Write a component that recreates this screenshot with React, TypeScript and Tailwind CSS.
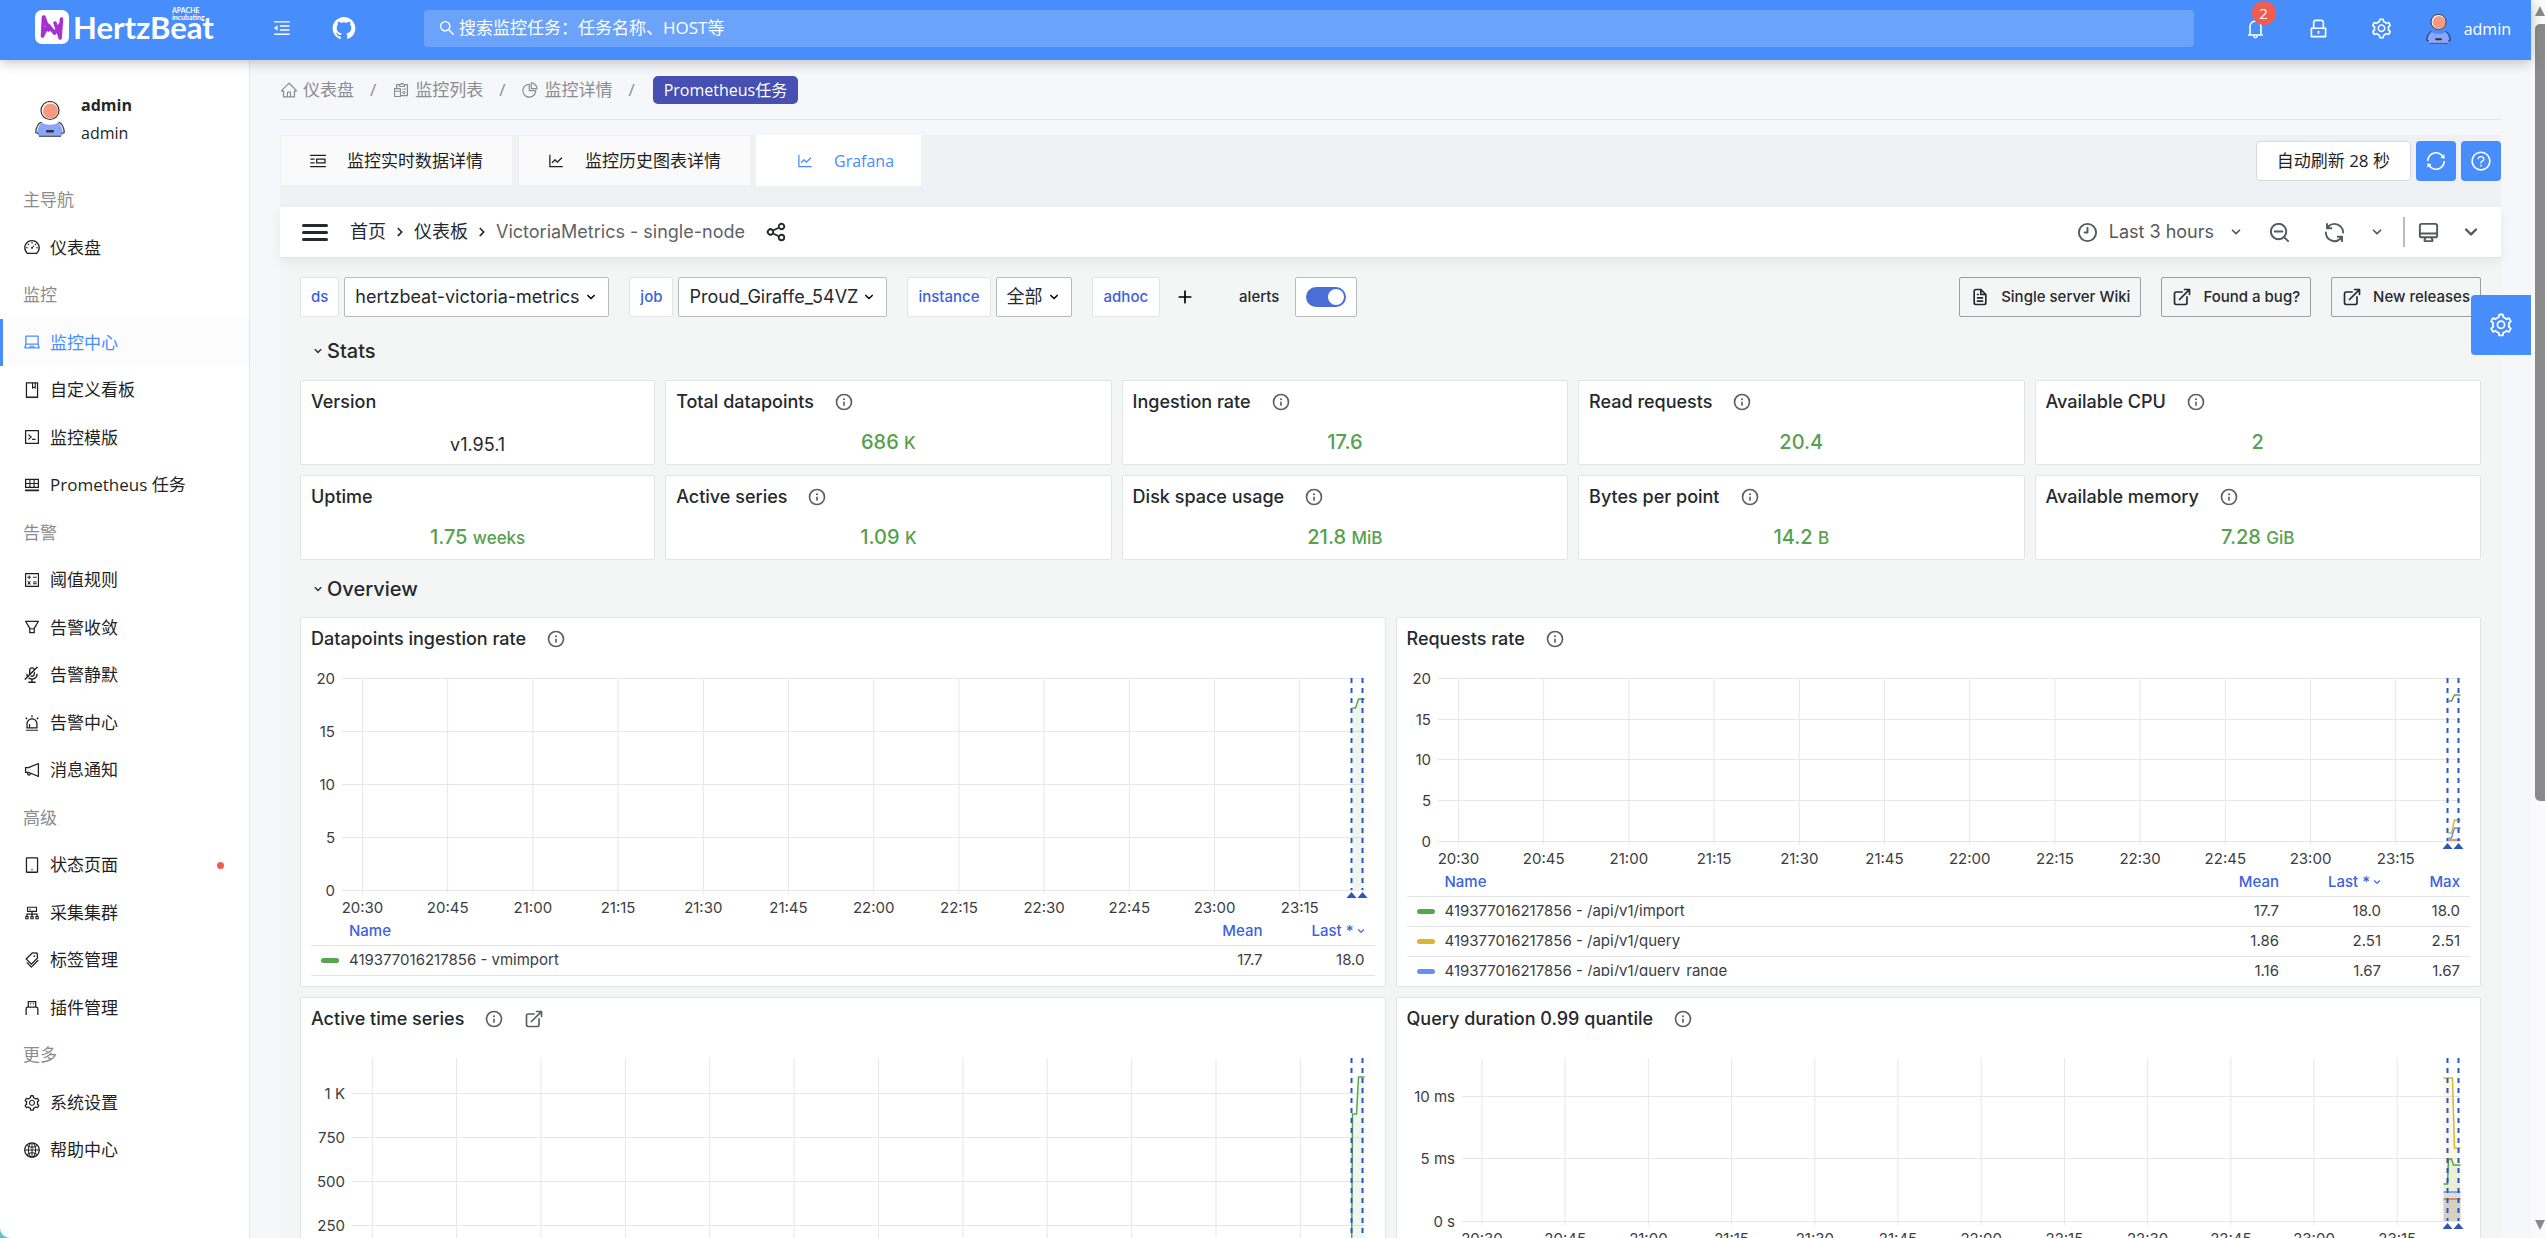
import type { ComponentType, ReactNode } from "react";
import {
  AiOutlineAlert,
  AiOutlineAudioMuted,
  AiOutlineBell,
  AiOutlineBook,
  AiOutlineCalculator,
  AiOutlineCluster,
  AiOutlineCode,
  AiOutlineDashboard,
  AiOutlineFilter,
  AiOutlineGlobal,
  AiOutlineHome,
  AiOutlineInsertRowBelow,
  AiOutlineLaptop,
  AiOutlineLineChart,
  AiOutlineLock,
  AiOutlineMenuFold,
  AiOutlineNotification,
  AiOutlinePicRight,
  AiOutlinePieChart,
  AiOutlineQuestionCircle,
  AiOutlineReconciliation,
  AiOutlineSearch,
  AiOutlineSetting,
  AiOutlineSync,
  AiOutlineTablet,
  AiOutlineTags,
  AiOutlineUsb,
  AiFillGithub,
} from "react-icons/ai";

const icons = {
  info: "M12,2A10,10,0,1,0,22,12,10.01114,10.01114,0,0,0,12,2Zm0,18a8,8,0,1,1,8-8A8.00917,8.00917,0,0,1,12,20Zm0-8.5a1,1,0,0,0-1,1v3a1,1,0,0,0,2,0v-3A1,1,0,0,0,12,11.5Zm0-4a1.25,1.25,0,1,0,1.25,1.25A1.25,1.25,0,0,0,12,7.5Z",
  down: "M17,9.17a1,1,0,0,0-1.41,0L12,12.71,8.46,9.17a1,1,0,0,0-1.41,0,1,1,0,0,0,0,1.42l4.24,4.24a1,1,0,0,0,1.42,0L17,10.59A1,1,0,0,0,17,9.17Z",
  right: "M14.83,11.29,10.59,7.05a1,1,0,0,0-1.42,0,1,1,0,0,0,0,1.41L12.71,12,9.17,15.54a1,1,0,0,0,0,1.41,1,1,0,0,0,.71.29,1,1,0,0,0,.71-.29l4.24-4.24A1,1,0,0,0,14.83,11.29Z",
  external: "M18,10.82a1,1,0,0,0-1,1V19a1,1,0,0,1-1,1H5a1,1,0,0,1-1-1V8A1,1,0,0,1,5,7h7.18a1,1,0,0,0,0-2H5A3,3,0,0,0,2,8V19a3,3,0,0,0,3,3H16a3,3,0,0,0,3-3V11.82A1,1,0,0,0,18,10.82Zm3.92-8.2a1,1,0,0,0-.54-.54A1,1,0,0,0,21,2H15a1,1,0,0,0,0,2h3.59L8.29,14.29a1,1,0,0,0,0,1.42,1,1,0,0,0,1.42,0L20,5.41V9a1,1,0,0,0,2,0V3A1,1,0,0,0,21.92,2.62Z",
  zoomOut: "M21.71,20.29,18,16.61A9,9,0,1,0,16.61,18l3.68,3.68a1,1,0,0,0,1.42,0A1,1,0,0,0,21.71,20.29ZM11,18a7,7,0,1,1,7-7A7,7,0,0,1,11,18Zm4-8H7a1,1,0,0,0,0,2h8a1,1,0,0,0,0-2Z",
  sync: "M19.91,15.51H15.38a1,1,0,0,0,0,2h2.4A8,8,0,0,1,4,12a1,1,0,0,0-2,0,10,10,0,0,0,16.88,7.23V21a1,1,0,0,0,2,0V16.5A1,1,0,0,0,19.91,15.51ZM12,2A10,10,0,0,0,5.12,4.77V3a1,1,0,0,0-2,0V7.5a1,1,0,0,0,1,1h4.5a1,1,0,0,0,0-2H6.22A8,8,0,0,1,20,12a1,1,0,0,0,2,0A10,10,0,0,0,12,2Z",
  clock: "M12,6a.99974.99974,0,0,0-1,1v4H9a1,1,0,0,0,0,2h3a.99974.99974,0,0,0,1-1V7A.99974.99974,0,0,0,12,6Zm0-4A10,10,0,1,0,22,12,10.01146,10.01146,0,0,0,12,2Zm0,18a8,8,0,1,1,8-8A8.00917,8.00917,0,0,1,12,20Z",
  monitor: "M19,2H5A3,3,0,0,0,2,5V15a3,3,0,0,0,3,3H7.64l-.58,1a2,2,0,0,0,0,2,2,2,0,0,0,1.75,1h6.46A2,2,0,0,0,17,21a2,2,0,0,0,0-2l-.59-1H19a3,3,0,0,0,3-3V5A3,3,0,0,0,19,2ZM8.77,20,10,18H14l1.2,2ZM20,15a1,1,0,0,1-1,1H5a1,1,0,0,1-1-1V14H20Zm0-3H4V5A1,1,0,0,1,5,4H19a1,1,0,0,1,1,1Z",
  share: "M18,14a4,4,0,0,0-3.08,1.48l-5.1-2.35a3.64,3.64,0,0,0,0-2.26l5.1-2.35A4,4,0,1,0,14,6a4.17,4.17,0,0,0,.07.71L8.79,9.14a4,4,0,1,0,0,5.72l5.28,2.43A4.17,4.17,0,0,0,14,18a4,4,0,1,0,4-4ZM18,4a2,2,0,1,1-2,2A2,2,0,0,1,18,4ZM6,14a2,2,0,1,1,2-2A2,2,0,0,1,6,14Zm12,6a2,2,0,1,1,2-2A2,2,0,0,1,18,20Z",
  file: "M9,10h1a1,1,0,0,0,0-2H9a1,1,0,0,0,0,2Zm0,2a1,1,0,0,0,0,2h6a1,1,0,0,0,0-2ZM20,8.94a1.31,1.31,0,0,0-.06-.27l0-.09a1.07,1.07,0,0,0-.19-.28h0l-6-6h0a1.07,1.07,0,0,0-.28-.19.32.32,0,0,0-.09,0A.88.88,0,0,0,13.05,2H7A3,3,0,0,0,4,5V19a3,3,0,0,0,3,3H17a3,3,0,0,0,3-3V9S20,9,20,8.94ZM14,5.41,16.59,8H14ZM18,19a1,1,0,0,1-1,1H7a1,1,0,0,1-1-1V5A1,1,0,0,1,7,4h5V9a1,1,0,0,0,1,1h5Zm-3-3H9a1,1,0,0,0,0,2h6a1,1,0,0,0,0-2Z",
  plus: "M19,11H13V5a1,1,0,0,0-2,0v6H5a1,1,0,0,0,0,2h6v6a1,1,0,0,0,2,0V13h6a1,1,0,0,0,0-2Z",
};

function Icon({ name, size = 22, className = "" }: { name: keyof typeof icons; size?: number; className?: string }) {
  return (
    <svg viewBox="0 0 24 24" width={size} height={size} fill="currentColor" className={`shrink-0 ${className}`} aria-hidden="true">
      <path d={icons[name]} />
    </svg>
  );
}

function Avatar({ height }: { height: number }) {
  return (
    <svg viewBox="0 0 30 36" height={height} className="shrink-0" aria-hidden="true">
      <circle cx="15" cy="9.500" r="9" fill="#fff" stroke="#333" strokeWidth="1.200" />
      <circle cx="15.500" cy="10" r="7.600" fill="#f79a80" />
      <path d="M7 21.500C10 24.500 20 24.500 23 21.500C26 23.500 28 28 27.500 33Q27 35.500 24 35.500H6Q3 35.500 2.500 33C2 28 4 23.500 7 21.500Z" fill="#8ba6f8" />
      <path d="M3.500 32.500L0.800 31.500C1 26.500 3 22.500 6.500 21M26.500 32.500L29.200 31.500C29 26.500 27 22.500 23.500 21" fill="none" stroke="#333" strokeWidth="1.200" />
      <path d="M4 35.300H26" stroke="#555" strokeWidth="1.200" />
      <rect x="11" y="29" width="8" height="2.600" rx="1" fill="#333" />
    </svg>
  );
}

type MenuEntry = { label: string; icon?: ComponentType<{ size?: number }>; active?: boolean; dot?: boolean };

const menu: MenuEntry[] = [
  { label: "主导航" },
  { label: "仪表盘", icon: AiOutlineDashboard },
  { label: "监控" },
  { label: "监控中心", icon: AiOutlineLaptop, active: true },
  { label: "自定义看板", icon: AiOutlineBook },
  { label: "监控模版", icon: AiOutlineCode },
  { label: "Prometheus 任务", icon: AiOutlineInsertRowBelow },
  { label: "告警" },
  { label: "阈值规则", icon: AiOutlineCalculator },
  { label: "告警收敛", icon: AiOutlineFilter },
  { label: "告警静默", icon: AiOutlineAudioMuted },
  { label: "告警中心", icon: AiOutlineAlert },
  { label: "消息通知", icon: AiOutlineNotification },
  { label: "高级" },
  { label: "状态页面", icon: AiOutlineTablet, dot: true },
  { label: "采集集群", icon: AiOutlineCluster },
  { label: "标签管理", icon: AiOutlineTags },
  { label: "插件管理", icon: AiOutlineUsb },
  { label: "更多" },
  { label: "系统设置", icon: AiOutlineSetting },
  { label: "帮助中心", icon: AiOutlineGlobal },
];

const stats = [
  { title: "Version", value: "v1.95.1", plain: true },
  { title: "Total datapoints", value: "686", unit: "K", info: true },
  { title: "Ingestion rate", value: "17.6", info: true },
  { title: "Read requests", value: "20.4", info: true },
  { title: "Available CPU", value: "2", info: true },
  { title: "Uptime", value: "1.75", unit: "weeks" },
  { title: "Active series", value: "1.09", unit: "K", info: true },
  { title: "Disk space usage", value: "21.8", unit: "MiB", info: true },
  { title: "Bytes per point", value: "14.2", unit: "B", info: true },
  { title: "Available memory", value: "7.28", unit: "GiB", info: true },
];

const times = ["20:30", "20:45", "21:00", "21:15", "21:30", "21:45", "22:00", "22:15", "22:30", "22:45", "23:00", "23:15"];

const green = "#56a64b";
const yellow = "#dab62c";
const blue = "#6690f0";
const orange = "#e0752d";

// points are measured from the right edge of the plot
type Series = { color: string; points: [number, number][]; fill?: number };

function Chart({ height, left, top = 20, bottom, ticks, series }: {
  height: number;
  left: number;
  top?: number;
  bottom: number;
  ticks: { label: string; y: number }[];
  series: Series[];
}) {
  return (
    <svg width="100%" height={height} className="block shrink-0 font-['Inter',sans-serif] text-[15px]" fill="#3b3d42">
      {ticks.map((t) => (
        <text key={t.label} x={left - 7} y={t.y} textAnchor="end" dominantBaseline="central">{t.label}</text>
      ))}
      <svg x={left} y={0} height={height} style={{ width: `calc(100% - ${left + 20}px)` }} overflow="visible">
        {ticks.map((t) => (
          <line key={t.label} x1="0" x2="100%" y1={t.y + 0.5} y2={t.y + 0.5} stroke="#e6e7e8" />
        ))}
        {times.map((time, i) => {
          const x = `${2 + (i * 100) / 12}%`;
          return (
            <g key={time}>
              <line x1={x} x2={x} y1={top} y2={bottom + 4} stroke="#e6e7e8" />
              <text x={x} y={bottom + 17} textAnchor="middle" dominantBaseline="central">{time}</text>
            </g>
          );
        })}
        <svg x="100%" y={0} overflow="visible">
          {series.map((s) => {
            const line = s.points.map((p) => p.join(",")).join(" ");
            const first = s.points[0][0];
            const last = s.points[s.points.length - 1][0];
            return (
              <g key={s.color}>
                {s.fill && <polygon points={`${first},${bottom} ${line} ${last},${bottom}`} fill={s.color} fillOpacity={s.fill} />}
                <polyline points={line} fill="none" stroke={s.color} strokeWidth="1.5" />
              </g>
            );
          })}
          {[-13, -2].map((x) => (
            <g key={x}>
              <line x1={x} x2={x} y1={top} y2={bottom} stroke="#2f55b8" strokeWidth="2" strokeDasharray="5 5" />
              <path d={`M${x - 5} ${bottom + 8}L${x} ${bottom + 2}L${x + 5} ${bottom + 8}Z`} fill="#2f55b8" />
            </g>
          ))}
        </svg>
      </svg>
    </svg>
  );
}

function Legend({ columns, rows }: { columns: string[]; rows: { color: string; name: string; values: string[] }[] }) {
  return (
    <div className="px-[10px]">
      <table className="w-full border-collapse text-[15px] leading-5 text-[#3b3d42]">
        <thead>
          <tr className="h-[27px] border-b border-[#e3e4e5] text-[#3d5fe0]">
            <th className="w-[38px]" aria-label="Color"></th>
            <th className="text-left font-medium">Name</th>
            {columns.map((c) => (
              <th key={c} className={`text-right font-medium ${c === "Max" ? "w-[79px] pr-[10px]" : c === "Mean" ? "w-[102px] pr-[10px]" : "w-[102px] pr-[7px]"}`}>
                <span className="inline-flex items-center">
                  {c}
                  {c === "Last *" && <Icon name="down" size={14} />}
                </span>
              </th>
            ))}
          </tr>
        </thead>
        <tbody>
          {rows.map((r) => (
            <tr key={r.name} className="h-[30px] border-b border-[#e3e4e5]">
              <td><span className={`ml-[10px] block h-[5px] w-[18px] rounded-full ${r.color}`}></span></td>
              <td>{r.name}</td>
              {r.values.map((v, i) => (
                <td key={i} className="pr-[10px] text-right">{v}</td>
              ))}
            </tr>
          ))}
        </tbody>
      </table>
    </div>
  );
}

function PanelTitle({ title, info, link }: { title: string; info?: boolean; link?: boolean }) {
  return (
    <div className="flex h-10 shrink-0 items-center gap-5 px-[10px] pt-[2px] text-[#24292e]">
      <h3 className="text-lg leading-6 font-medium">{title}</h3>
      {info && <Icon name="info" size={20} className="text-[#5b5e63]" />}
      {link && (
        <a href="#explore" aria-label="Open link">
          <Icon name="external" size={20} className="text-[#5b5e63]" />
        </a>
      )}
    </div>
  );
}

function Panel({ title, link, children }: { title: string; link?: boolean; children: ReactNode }) {
  return (
    <section className="flex h-[370px] flex-col overflow-hidden rounded-[2px] border border-[#e3e5e5] bg-white pb-[10px]">
      <PanelTitle title={title} info link={link} />
      <div className="min-h-0 flex-1 overflow-hidden">{children}</div>
    </section>
  );
}

function Variable({ label, value }: { label: string; value: string }) {
  return (
    <div className="flex gap-[5px]">
      <label htmlFor={label} className="flex h-10 items-center rounded-[2px] border border-[#e3e5e5] bg-white px-[10px] text-[15px] font-medium text-[#3d5fe0]">
        {label}
      </label>
      <div className="relative">
        <select id={label} className="h-10 appearance-none rounded-[2px] border border-[#b9bbbd] bg-white pr-[28px] pl-[10px] text-lg text-[#24292e]">
          <option>{value}</option>
        </select>
        <Icon name="down" size={18} className="pointer-events-none absolute top-[11px] right-[9px]" />
      </div>
    </div>
  );
}

function RowHeading({ children }: { children: string }) {
  return (
    <button className="flex items-center gap-px pl-[10px] text-xl font-medium text-[#24292e]">
      <Icon name="down" size={16} />
      {children}
    </button>
  );
}

function Header() {
  return (
    <header className="z-20 flex h-[60px] shrink-0 items-center bg-[#478dfc] pr-5 pl-[35px] text-white shadow-[0_2px_12px_rgba(0,0,0,0.25)]">
      <a href="#home" className="relative flex w-[179px] items-center gap-1 pb-[6px]">
        <svg viewBox="0 0 34 34" width="34" height="34" className="shrink-0" aria-hidden="true">
          <rect width="34" height="34" rx="7" fill="#fff" />
          <path d="M8.500 7L7.500 26M7.500 26L13 15L19.500 23L26 13.500M26.500 9L25 28M9 7L13.500 20M20 13L25 27" fill="none" stroke="#a82fd0" strokeWidth="3.600" strokeLinecap="round" strokeLinejoin="round" />
        </svg>
        <span className="font-['Lato',sans-serif] text-[31px] leading-[34px] font-bold">HertzBeat</span>
        <span className="absolute top-[-3px] left-[137px] font-['Lato',sans-serif] text-[7px] leading-[7px] font-bold">
          APACHE
          <br />
          incubating
        </span>
      </a>
      <button aria-label="折叠菜单" className="ml-[58px] pb-1"><AiOutlineMenuFold size={20} /></button>
      <a href="#github" aria-label="GitHub" className="ml-[39px] pb-1"><AiFillGithub size={26} /></a>
      <label className="mr-[50px] mb-1 ml-[67px] flex h-[37px] flex-1 items-center gap-[3px] rounded-[4px] bg-[#6ba2fa] px-[14px]">
        <AiOutlineSearch size={18} />
        <input
          aria-label="搜索"
          placeholder="搜索监控任务：任务名称、HOST等"
          className="flex-1 bg-transparent text-[17px] outline-none placeholder:text-white"
        />
      </label>
      <button aria-label="通知" className="relative pb-1">
        <AiOutlineBell size={23} />
        <span className="absolute -top-4 left-2 h-6 w-6 rounded-full bg-[#f25b50] text-center text-[15px] leading-6">2</span>
      </button>
      <button aria-label="锁定" className="ml-10 pb-1"><AiOutlineLock size={23} /></button>
      <button aria-label="设置" className="ml-10 pb-1"><AiOutlineSetting size={23} /></button>
      <button className="ml-[33px] flex items-center gap-[13px] pb-[2px] text-base">
        <Avatar height={30} />
        admin
      </button>
    </header>
  );
}

function Sidebar() {
  return (
    <aside className="flex w-[250px] shrink-0 flex-col border-r border-[#e4e5e8] bg-white">
      <div className="flex h-[116px] items-center gap-4 pt-px pl-[35px] text-[#262626]">
        <Avatar height={36} />
        <div className="text-base leading-7">
          <p className="font-bold">admin</p>
          <p>admin</p>
        </div>
      </div>
      <nav className="grid h-[998px] shrink-0 auto-rows-fr">
        {menu.map((m) =>
          m.icon ? (
            <a
              key={m.label}
              href="#menu"
              className={`flex items-center border-l-[3px] pr-[25px] pl-5 text-[17px] ${
                m.active ? "border-[#478dfc] bg-[#fcfcfc] text-[#478dfc]" : "border-transparent text-[#1f1f1f]"
              }`}
            >
              <m.icon size={18} />
              <span className="ml-[9px] flex-1">{m.label}</span>
              {m.dot && <span className="h-[7px] w-[7px] rounded-full bg-[#f25b50]"></span>}
            </a>
          ) : (
            <p key={m.label} className="flex items-center pl-[23px] text-[17px] text-[#8c8c8c]">{m.label}</p>
          )
        )}
      </nav>
    </aside>
  );
}

const crumbs = [
  { label: "仪表盘", icon: AiOutlineHome },
  { label: "监控列表", icon: AiOutlineReconciliation },
  { label: "监控详情", icon: AiOutlinePieChart },
];

function Breadcrumb() {
  return (
    <nav className="flex h-[60px] items-center border-b border-[#e3e5ea] pt-px text-[17px] text-[#8b8c8f]">
      {crumbs.map((c) => (
        <span key={c.label} className="flex items-center">
          <c.icon size={18} />
          <a href="#crumb" className="ml-[5px]">{c.label}</a>
          <span className="mx-4">/</span>
        </span>
      ))}
      <span className="ml-[2px] rounded-[5px] bg-[#464fb2] px-[11px] text-base leading-7 text-white">Prometheus任务</span>
    </nav>
  );
}

function Tabs() {
  return (
    <div className="mt-[15px] flex h-[72px] items-start gap-[5px] bg-[#f0f1f5]">
      <div role="tablist" className="flex flex-1 gap-[5px] text-[17px] text-[#1f1f1f]">
        <button role="tab" className="flex h-[51px] items-center gap-5 border border-[#f0f0f0] bg-[#fafafa] pr-[29px] pl-7">
          <AiOutlinePicRight size={18} />
          监控实时数据详情
        </button>
        <button role="tab" className="flex h-[51px] items-center gap-5 border border-[#f0f0f0] bg-[#fafafa] pr-[29px] pl-7">
          <AiOutlineLineChart size={18} />
          监控历史图表详情
        </button>
        <button role="tab" aria-selected="true" className="flex h-[51px] items-center gap-5 bg-white pr-[27px] pl-10 text-base text-[#478dfc]">
          <AiOutlineLineChart size={18} />
          Grafana
        </button>
      </div>
      <button className="mt-[6px] h-10 rounded-[4px] border border-[#d9d9d9] bg-white px-5 text-[17px] text-[#1f1f1f]">自动刷新 28 秒</button>
      <button aria-label="刷新" className="mt-[6px] flex h-10 w-10 items-center justify-center rounded-[4px] bg-[#478dfc] text-white">
        <AiOutlineSync size={22} />
      </button>
      <button aria-label="帮助" className="mt-[6px] flex h-10 w-10 items-center justify-center rounded-[4px] bg-[#478dfc] text-white">
        <AiOutlineQuestionCircle size={22} />
      </button>
    </div>
  );
}

function Toolbar() {
  return (
    <div className="flex h-[51px] items-center border-b border-[#e0e2e3] bg-white pr-4 pl-[22px] text-lg text-[#24292e] shadow-[0_4px_12px_rgba(0,0,0,0.06)]">
      <button aria-label="菜单" className="flex w-[26px] flex-col gap-1">
        <span className="h-[3px] rounded-full bg-current"></span>
        <span className="h-[3px] rounded-full bg-current"></span>
        <span className="h-[3px] rounded-full bg-current"></span>
      </button>
      <a href="#home" className="ml-[22px]">首页</a>
      <Icon name="right" size={20} className="mx-1" />
      <a href="#dashboards">仪表板</a>
      <Icon name="right" size={20} className="mx-1" />
      <span className="text-[#5f6266]">VictoriaMetrics - single-node</span>
      <button aria-label="Share" className="ml-5 flex-1"><Icon name="share" /></button>
      <div className="flex items-center text-[#55585c]">
        <button className="flex items-center">
          <Icon name="clock" size={23} className="mr-[10px]" />
          Last 3 hours
          <Icon name="down" size={20} className="ml-3" />
        </button>
        <button aria-label="Zoom out" className="ml-[22px]"><Icon name="zoomOut" size={23} /></button>
        <button aria-label="Refresh" className="ml-8"><Icon name="sync" size={23} /></button>
        <button aria-label="Refresh interval" className="ml-[21px]"><Icon name="down" size={20} /></button>
        <span className="mr-3 ml-4 h-[30px] w-[2px] bg-[#b9bbbd]"></span>
        <button aria-label="Kiosk"><Icon name="monitor" size={23} /></button>
        <button aria-label="Collapse" className="ml-[17px]"><Icon name="down" size={28} /></button>
      </div>
    </div>
  );
}

function LinkButton({ icon, children }: { icon: keyof typeof icons; children: string }) {
  return (
    <a href="#link" className="flex h-10 items-center gap-[11px] rounded-[2px] border border-[#9c9ea1] px-[10px] text-[15px] font-medium whitespace-nowrap text-[#24292e]">
      <Icon name={icon} size={20} />
      {children}
    </a>
  );
}

function Dashboard() {
  return (
    <div className="bg-[#f4f5f5] font-['Inter','Noto_Sans_CJK_SC',sans-serif]">
      <Toolbar />
      <div className="px-5 pb-5">
        <div className="flex h-[59px] items-end">
          <div className="flex flex-1 items-center gap-5">
            <Variable label="ds" value="hertzbeat-victoria-metrics" />
            <Variable label="job" value="Proud_Giraffe_54VZ" />
            <Variable label="instance" value="全部" />
            <span className="flex h-10 items-center rounded-[2px] border border-[#e3e5e5] bg-white px-[11px] text-[15px] font-medium text-[#3d5fe0]">adhoc</span>
            <button aria-label="Add filter" className="-ml-[5px]"><Icon name="plus" size={20} /></button>
            <div className="ml-6 flex items-center gap-4 text-[15px] font-medium text-[#24292e]">
              <label htmlFor="alerts">alerts</label>
              <span className="flex h-10 w-[62px] items-center justify-center rounded-[2px] border border-[#b9bbbd] bg-white">
                <input
                  id="alerts"
                  type="checkbox"
                  defaultChecked
                  className="h-5 w-10 appearance-none rounded-full border-2 border-[#4a6ed8] bg-[#4a6ed8] before:ml-auto before:block before:h-4 before:w-4 before:rounded-full before:bg-white"
                />
              </span>
            </div>
          </div>
          <div className="flex gap-5">
            <LinkButton icon="file">Single server Wiki</LinkButton>
            <LinkButton icon="external">Found a bug?</LinkButton>
            <LinkButton icon="external">New releases</LinkButton>
          </div>
        </div>
        <div className="flex h-[63px] items-center pt-[5px]"><RowHeading>Stats</RowHeading></div>
        <div className="grid grid-cols-24 gap-[10px]">
          {stats.map((s) => (
            <section
              key={s.title}
              className={`h-[85px] rounded-[2px] border border-[#e3e5e5] bg-white ${s.plain || s.unit === "weeks" ? "col-span-4" : "col-span-5"}`}
            >
              <PanelTitle title={s.title} info={s.info} />
              {s.plain ? (
                <p className="pt-3 text-center text-lg leading-6 text-[#24292e]">{s.value}</p>
              ) : (
                <p className="pt-[9px] text-center text-xl leading-6 font-medium text-[#57a04c]">
                  {s.value} <span className="text-[17px]">{s.unit}</span>
                </p>
              )}
            </section>
          ))}
        </div>
        <div className="flex h-[57px] items-center"><RowHeading>Overview</RowHeading></div>
        <div className="grid grid-cols-2 gap-[10px]">
          <Panel title="Datapoints ingestion rate">
            <Chart
              height={260}
              left={41}
              bottom={232}
              ticks={[{ label: "20", y: 20 }, { label: "15", y: 73 }, { label: "10", y: 126 }, { label: "5", y: 179 }, { label: "0", y: 232 }]}
              series={[{ color: green, fill: 0.1, points: [[-12, 50], [-9, 50], [-6, 41], [0, 41]] }]}
            />
            <Legend columns={["Mean", "Last *"]} rows={[{ color: "bg-[#56a64b]", name: "419377016217856 - vmimport", values: ["17.7", "18.0"] }]} />
          </Panel>
          <Panel title="Requests rate">
            <Chart
              height={211}
              left={41}
              bottom={183}
              ticks={[{ label: "20", y: 20 }, { label: "15", y: 61 }, { label: "10", y: 101 }, { label: "5", y: 142 }, { label: "0", y: 183 }]}
              series={[
                { color: green, points: [[-12, 43], [-9, 43], [-6, 37], [0, 37]] },
                { color: yellow, points: [[-12, 175], [-9, 175], [-6, 162], [0, 162]] },
                { color: blue, points: [[-12, 180], [-9, 180], [-6, 170], [0, 170]] },
                { color: orange, points: [[-12, 182], [0, 182]] },
              ]}
            />
            <Legend
              columns={["Mean", "Last *", "Max"]}
              rows={[
                { color: "bg-[#56a64b]", name: "419377016217856 - /api/v1/import", values: ["17.7", "18.0", "18.0"] },
                { color: "bg-[#dab62c]", name: "419377016217856 - /api/v1/query", values: ["1.86", "2.51", "2.51"] },
                { color: "bg-[#6690f0]", name: "419377016217856 - /api/v1/query_range", values: ["1.16", "1.67", "1.67"] },
              ]}
            />
          </Panel>
          <Panel title="Active time series" link>
            <Chart
              height={260}
              left={51}
              bottom={231}
              ticks={[{ label: "1 K", y: 55 }, { label: "750", y: 99 }, { label: "500", y: 143 }, { label: "250", y: 187 }, { label: "0", y: 231 }]}
              series={[{ color: green, fill: 0.1, points: [[-13, 231], [-12, 76], [-8, 76], [-6, 39], [0, 39]] }]}
            />
          </Panel>
          <Panel title="Query duration 0.99 quantile">
            <Chart
              height={211}
              left={65}
              bottom={183}
              ticks={[{ label: "10 ms", y: 58 }, { label: "5 ms", y: 120 }, { label: "0 s", y: 183 }]}
              series={[
                { color: yellow, fill: 0.1, points: [[-17, 40], [-8, 40], [-6, 110], [0, 110]] },
                { color: green, fill: 0.1, points: [[-17, 146], [-13, 146], [-12, 121], [-9, 121], [-7, 127], [0, 127]] },
                { color: blue, fill: 0.15, points: [[-17, 154], [0, 154]] },
                { color: orange, fill: 0.15, points: [[-17, 161], [0, 161]] },
              ]}
            />
          </Panel>
        </div>
      </div>
    </div>
  );
}

export default function App() {
  return (
    <div className="h-screen overflow-hidden bg-[#62c3bd] font-['Open_Sans','Noto_Sans_CJK_SC',sans-serif]">
      <div className="relative flex h-full overflow-hidden rounded-bl-[10px]">
        <div className="flex min-w-0 flex-1 flex-col">
          <Header />
          <div className="flex min-h-0 flex-1">
            <Sidebar />
            <main className="min-w-0 flex-1 overflow-hidden bg-[#f5f7fb] px-[30px]">
              <Breadcrumb />
              <Tabs />
              <Dashboard />
            </main>
          </div>
        </div>
        <div className="flex w-[14px] shrink-0 flex-col items-end bg-[#fafafa] py-[6px]">
          <svg viewBox="0 0 10 10" width="10" height="10" aria-hidden="true"><path d="M5 0L10 10H0Z" fill="#8a8a8a" /></svg>
          <span className="mt-2 h-[777px] w-[10px] rounded-l-[5px] bg-[#8a8a8a]"></span>
          <svg viewBox="0 0 10 10" width="10" height="10" className="mt-auto mb-[2px]" aria-hidden="true"><path d="M5 10L10 0H0Z" fill="#8a8a8a" /></svg>
        </div>
        <button aria-label="主题设置" className="absolute top-[295px] right-[14px] flex h-[60px] w-[60px] items-center justify-center rounded-l-[4px] bg-[#478dfc] text-white">
          <AiOutlineSetting size={26} />
        </button>
      </div>
    </div>
  );
}
